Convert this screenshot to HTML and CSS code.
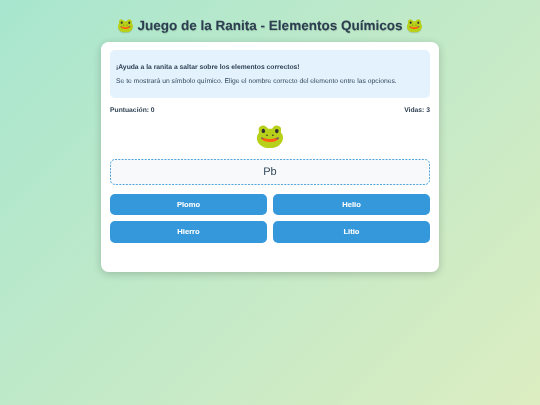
FILE: index.html
```html
<!DOCTYPE html>
<html lang="es">
<head>
<meta charset="utf-8">
<title>Juego de la Ranita</title>
<link rel="stylesheet" href="styles.css">
</head>
<body>
<h1 class="title">🐸 Juego de la Ranita - Elementos Químicos 🐸</h1>
<main class="card">
  <section class="info">
    <p class="info-lead">¡Ayuda a la ranita a saltar sobre los elementos correctos!</p>
    <p class="info-text">Se te mostrará un símbolo químico. Elige el nombre correcto del elemento entre las opciones.</p>
  </section>
  <div class="stats"><span>Puntuación: 0</span><span>Vidas: 3</span></div>
  <div class="frog">🐸</div>
  <div class="symbol">Pb<svg class="dash" aria-hidden="true"><rect class="dash-line" x="0.5" y="0.5" rx="4.5"/></svg></div>
  <div class="options">
    <button class="option">Plomo</button>
    <button class="option">Helio</button>
    <button class="option">Hierro</button>
    <button class="option">Litio</button>
  </div>
</main>
</body>
</html>
```
FILE: styles.css
```css
* { box-sizing: border-box; }
html { height: 100%; background: linear-gradient(135deg, #a8e6cf, #dcedc1); }
body {
  margin: 0;
  min-height: 100%;
  padding: 17px 101px 0;
  font-family: "Liberation Sans", Arial, sans-serif;
  color: #2c3e50;
  text-rendering: geometricPrecision;
  filter: blur(0.42px);
}
.title {
  margin: 0 -40px 7px;
  height: 18px;
  line-height: 18px;
  font-size: 13.5px;
  font-weight: 700;
  text-align: center;
  white-space: nowrap;
  -webkit-text-stroke: 0.08px;
  text-shadow: 0.5px 0.5px 1px rgba(0,0,0,0.15);
}
.card {
  height: 230px;
  padding: 8px 9px;
  background: #fff;
  border-radius: 7.5px;
  box-shadow: 0 2px 8px rgba(0,0,0,0.2);
}
.info {
  height: 48px;
  padding: 13px 6px 0;
  background: #e3f2fd;
  border-radius: 5px;
}
.info-lead { margin: 0 0 5px; font-size: 6.75px; line-height: 9px; font-weight: 700; }
.info-text { margin: 0; font-size: 6.75px; line-height: 9px; color: #34495e; }
.stats {
  display: flex;
  justify-content: space-between;
  margin-top: 8px;
  font-size: 6.75px;
  line-height: 9px;
  font-weight: 700;
}
.frog {
  margin-top: 5px;
  height: 33px;
  font-size: 24px;
  line-height: 33px;
  text-align: center;
}
.symbol {
  position: relative;
  margin-top: 6px;
  height: 26px;
  line-height: 26px;
  font-size: 11px;
  color: #34495e;
  text-align: center;
  background: #f8f9fa;
  border-radius: 5px;
}
.dash {
  position: absolute;
  inset: 0;
  width: 100%;
  height: 100%;
}
.dash-line {
  width: calc(100% - 1px);
  height: calc(100% - 1px);
  fill: none;
  stroke: #3498db;
  stroke-width: 1;
  stroke-dasharray: 2 1.3;
  opacity: 0.85;
}
.options {
  display: grid;
  grid-template-columns: 1fr 1fr;
  gap: 6px;
  margin-top: 8.5px;
}
.option {
  height: 21.5px;
  padding: 0;
  border: 0;
  border-radius: 5px;
  background: #3498db;
  color: #fff;
  font-family: inherit;
  font-size: 7.6px;
  font-weight: 700;
  -webkit-text-stroke: 0.08px;
}
```
